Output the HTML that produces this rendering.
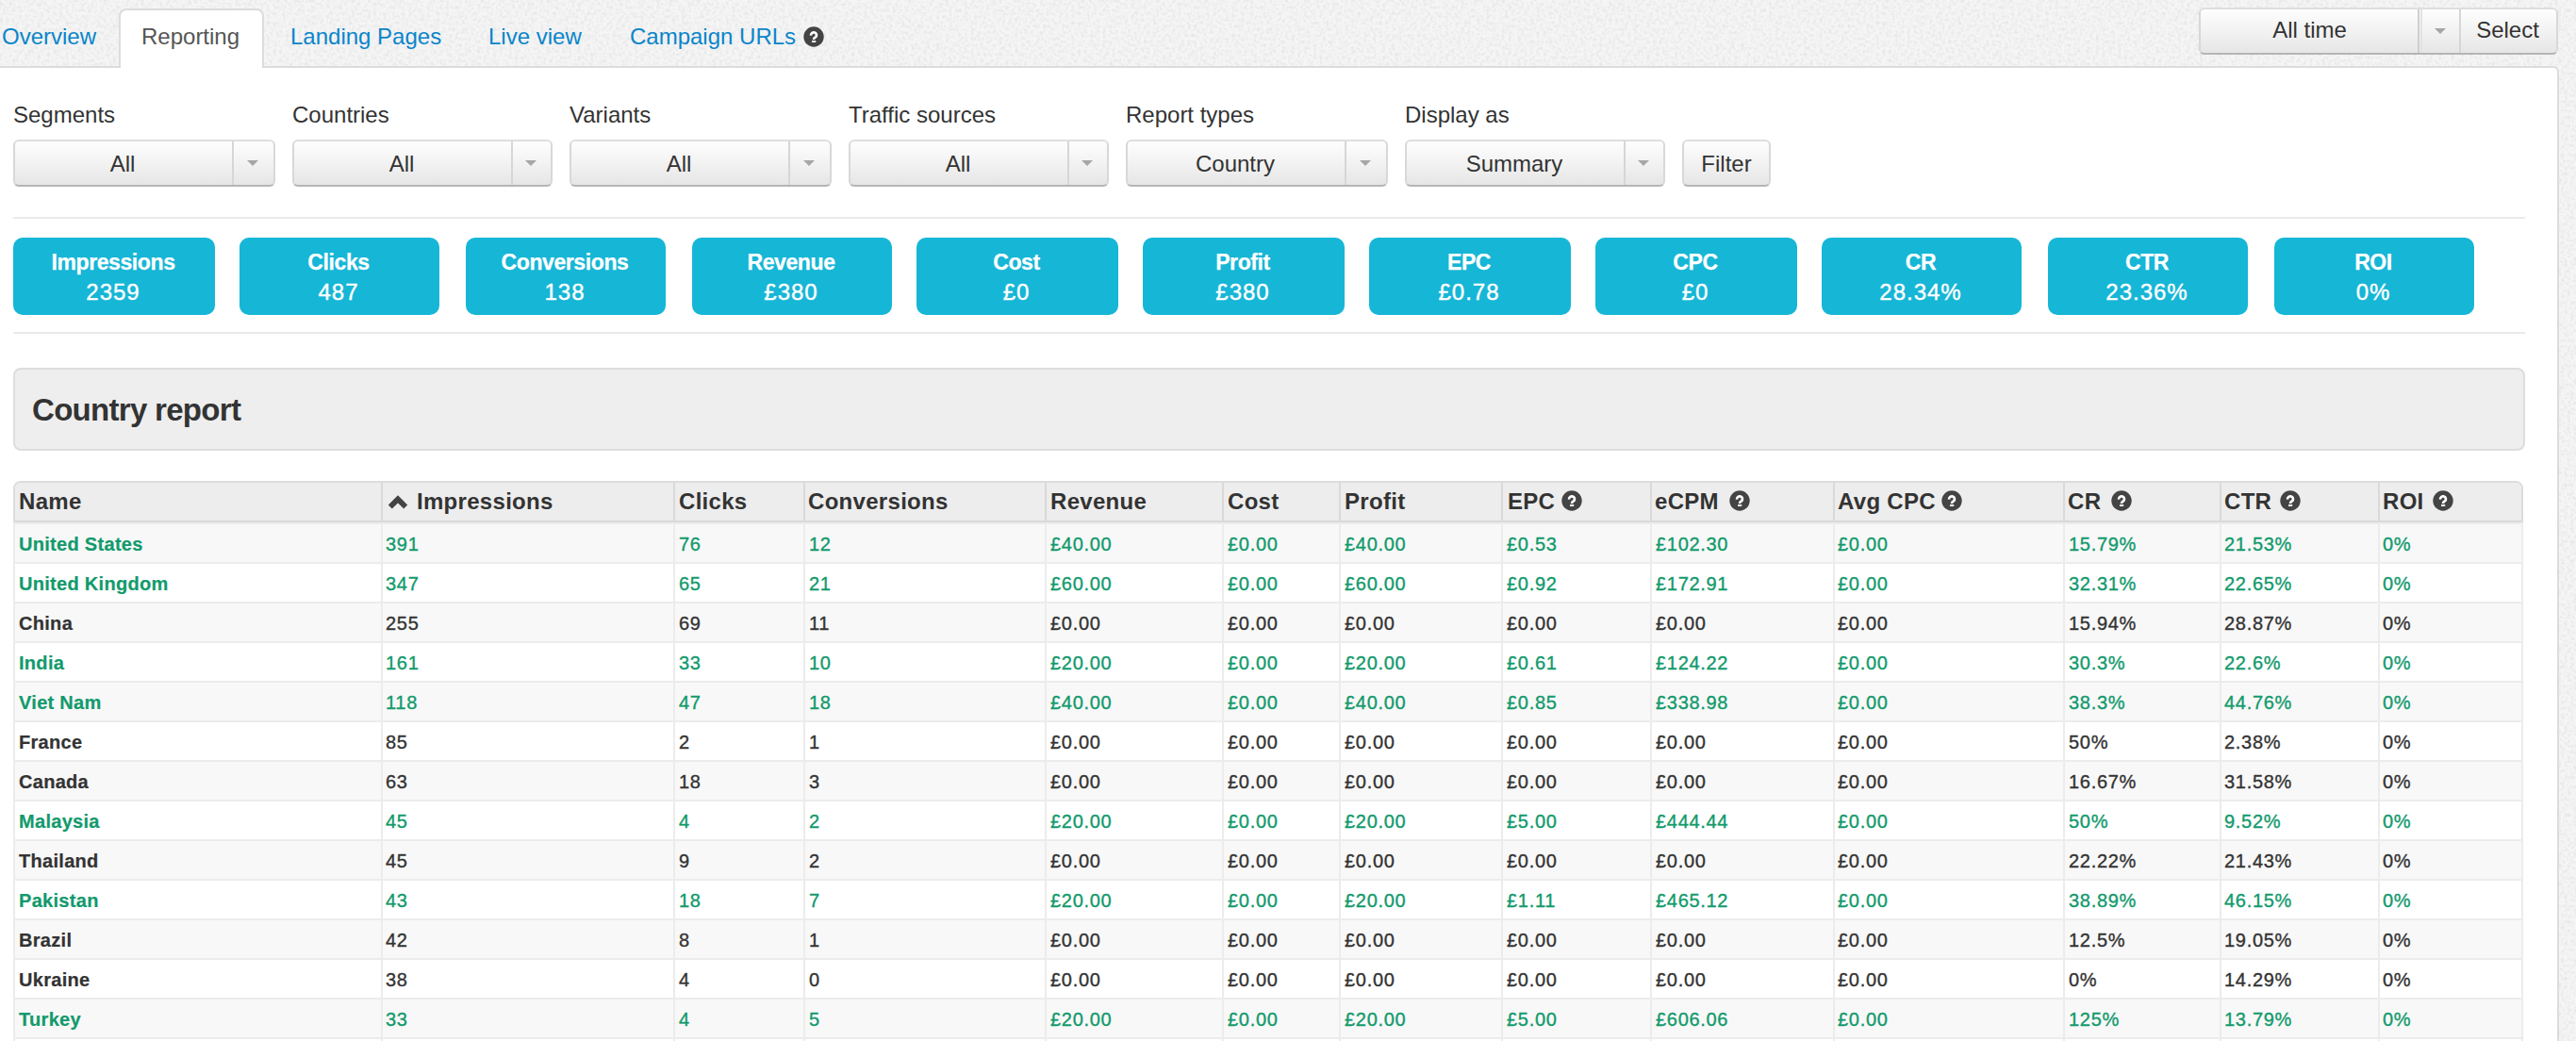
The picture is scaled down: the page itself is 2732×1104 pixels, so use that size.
<!DOCTYPE html><html><head><meta charset="utf-8"><title>Reporting</title><style>
*{box-sizing:border-box;margin:0;padding:0}
html,body{width:2732px;height:1104px;overflow:hidden}
body{background:#f1f1f1;font-family:"Liberation Sans",sans-serif;color:#333;position:relative}
.a{position:absolute;white-space:nowrap}
.tab{font-size:24px;line-height:24px;color:#0a85cb}
.acttab{position:absolute;left:126px;top:9px;width:154px;height:63px;background:#fff;border:2px solid #dcdcdc;border-bottom:none;border-radius:8px 8px 0 0}
.panel{position:absolute;left:-10px;top:70px;width:2724px;height:1100px;background:#fff;border:2px solid #dcdcdc;border-radius:0 6px 0 0}
.btn{position:absolute;background:linear-gradient(#fefefe,#e6e6e6);border:2px solid #d8d8d8;border-top-color:#dedede;border-bottom-color:#b5b5b5;border-radius:6px}
.lbl{font-size:24px;line-height:24px;color:#333}
.sel{font-size:24px;line-height:24px;color:#333;text-align:center}
.caret{position:absolute;width:0;height:0;border-left:6px solid transparent;border-right:6px solid transparent;border-top:6px solid #a6a6a6}
.div{position:absolute;width:2px;background:#d6d6d6}
.hr{position:absolute;left:14px;width:2664px;height:2px;background:#eaeaea}
.stat{position:absolute;top:252px;width:214px;height:82px;background:#16b6d6;border-radius:10px;color:#fff;text-align:center}
.stat .t{position:absolute;left:-2px;right:0;top:15px;font-size:23px;line-height:23px;font-weight:bold;letter-spacing:-.4px;-webkit-text-stroke:.25px #fff}
.stat .v{position:absolute;left:-2px;right:0;top:46px;font-size:24px;line-height:24px;letter-spacing:1px;-webkit-text-stroke:.4px #fff}
.well{position:absolute;left:14px;top:390px;width:2664px;height:88px;background:#eee;border:2px solid #ddd;border-radius:8px}
.well .h{position:absolute;left:18px;top:26px;font-size:33px;line-height:33px;letter-spacing:-.7px;font-weight:bold;color:#333}
.tbl{position:absolute;left:14px;top:510px;width:2662px;height:700px;border:2px solid #dcdcdc;border-radius:8px 8px 0 0;overflow:hidden;background:#fff}
.thead{position:absolute;left:0;top:0;width:100%;height:42px;background:#ededed;border-bottom:2px solid #d9d9d9}
.th{position:absolute;top:8px;letter-spacing:.3px;font-size:24px;line-height:24px;font-weight:bold;color:#333}
.row{position:absolute;left:0;width:100%;height:42px;border-top:2px solid #ececec}
.row.s{background:#f8f8f8}
.td{position:absolute;top:11px;font-size:20px;line-height:20px;letter-spacing:.7px;color:#333;-webkit-text-stroke:.35px currentColor}
.td.b{-webkit-text-stroke:.2px currentColor;letter-spacing:.3px}
.td.g{color:#129a6c}
.td.b{font-weight:bold}
.cd{position:absolute;width:2px;background:#ececec}
.hd{position:absolute;width:2px;background:#d9d9d9;top:0;height:40px}
svg.q{position:absolute}
</style></head><body>
<svg style="position:absolute;left:0;top:0" width="2732" height="1104"><filter id="nz" x="0" y="0" width="100%" height="100%"><feTurbulence type="fractalNoise" baseFrequency="0.3" numOctaves="2" seed="3"/><feColorMatrix values="0 0 0 0 0  0 0 0 0 0  0 0 0 0 0  1.6 0 0 0 -0.62"/></filter><rect width="2732" height="1104" fill="#f5f5f5"/><rect width="2732" height="1104" filter="url(#nz)" opacity=".08"/></svg>
<div class="panel"></div>
<div class="acttab"></div>
<div class="a tab" style="left:2px;top:27px">Overview</div>
<div class="a tab" style="left:150px;top:27px;color:#555">Reporting</div>
<div class="a tab" style="left:308px;top:27px">Landing Pages</div>
<div class="a tab" style="left:518px;top:27px">Live view</div>
<div class="a tab" style="left:668px;top:27px">Campaign URLs</div>
<svg class="q" style="left:852px;top:28px" width="22" height="22" viewBox="0 0 22 22"><circle cx="11" cy="11" r="10.7" fill="#444"/><path d="M8.1 9.6 A2.95 2.85 0 1 1 12.9 11.4 Q11 12.3 11 14" stroke="#fff" stroke-width="2.7" fill="none"/><rect x="9" y="14.9" width="4.2" height="2.2" rx=".6" fill="#fff"/></svg>
<div class="btn" style="left:2332px;top:8px;width:381px;height:50px"></div>
<div class="div" style="left:2564px;top:10px;height:46px;background:#cfcfcf"></div>
<div class="div" style="left:2567px;top:10px;height:46px;background:#e2e2e2"></div>
<div class="div" style="left:2608px;top:10px;height:46px;background:#d6d6d6"></div>
<div class="a sel" style="left:2335px;top:20px;width:229px">All time</div>
<div class="caret" style="left:2582px;top:30px"></div>
<div class="a sel" style="left:2608px;top:20px;width:103px">Select</div>
<div class="a lbl" style="left:14px;top:110px">Segments</div>
<div class="btn" style="left:14px;top:148px;width:278px;height:50px"></div>
<div class="div" style="left:246px;top:150px;height:46px"></div>
<div class="a sel" style="left:14px;top:162px;width:232px">All</div>
<div class="caret" style="left:262px;top:170px"></div>
<div class="a lbl" style="left:310px;top:110px">Countries</div>
<div class="btn" style="left:310px;top:148px;width:276px;height:50px"></div>
<div class="div" style="left:542px;top:150px;height:46px"></div>
<div class="a sel" style="left:310px;top:162px;width:232px">All</div>
<div class="caret" style="left:557px;top:170px"></div>
<div class="a lbl" style="left:604px;top:110px">Variants</div>
<div class="btn" style="left:604px;top:148px;width:278px;height:50px"></div>
<div class="div" style="left:836px;top:150px;height:46px"></div>
<div class="a sel" style="left:604px;top:162px;width:232px">All</div>
<div class="caret" style="left:852px;top:170px"></div>
<div class="a lbl" style="left:900px;top:110px">Traffic sources</div>
<div class="btn" style="left:900px;top:148px;width:276px;height:50px"></div>
<div class="div" style="left:1132px;top:150px;height:46px"></div>
<div class="a sel" style="left:900px;top:162px;width:232px">All</div>
<div class="caret" style="left:1147px;top:170px"></div>
<div class="a lbl" style="left:1194px;top:110px">Report types</div>
<div class="btn" style="left:1194px;top:148px;width:278px;height:50px"></div>
<div class="div" style="left:1426px;top:150px;height:46px"></div>
<div class="a sel" style="left:1194px;top:162px;width:232px">Country</div>
<div class="caret" style="left:1442px;top:170px"></div>
<div class="a lbl" style="left:1490px;top:110px">Display as</div>
<div class="btn" style="left:1490px;top:148px;width:276px;height:50px"></div>
<div class="div" style="left:1722px;top:150px;height:46px"></div>
<div class="a sel" style="left:1490px;top:162px;width:232px">Summary</div>
<div class="caret" style="left:1737px;top:170px"></div>
<div class="btn" style="left:1784px;top:148px;width:94px;height:50px"></div>
<div class="a sel" style="left:1784px;top:162px;width:94px">Filter</div>
<div class="hr" style="top:230px"></div>
<div class="hr" style="top:352px"></div>
<div class="stat" style="left:14px;width:214px"><div class="t">Impressions</div><div class="v">2359</div></div>
<div class="stat" style="left:254px;width:212px"><div class="t">Clicks</div><div class="v">487</div></div>
<div class="stat" style="left:494px;width:212px"><div class="t">Conversions</div><div class="v">138</div></div>
<div class="stat" style="left:734px;width:212px"><div class="t">Revenue</div><div class="v">£380</div></div>
<div class="stat" style="left:972px;width:214px"><div class="t">Cost</div><div class="v">£0</div></div>
<div class="stat" style="left:1212px;width:214px"><div class="t">Profit</div><div class="v">£380</div></div>
<div class="stat" style="left:1452px;width:214px"><div class="t">EPC</div><div class="v">£0.78</div></div>
<div class="stat" style="left:1692px;width:214px"><div class="t">CPC</div><div class="v">£0</div></div>
<div class="stat" style="left:1932px;width:212px"><div class="t">CR</div><div class="v">28.34%</div></div>
<div class="stat" style="left:2172px;width:212px"><div class="t">CTR</div><div class="v">23.36%</div></div>
<div class="stat" style="left:2412px;width:212px"><div class="t">ROI</div><div class="v">0%</div></div>
<div class="well"><div class="h">Country report</div></div>
<div class="tbl">
<div class="thead">
<div class="th" style="left:4px">Name</div>
<div class="hd" style="left:388px"></div>
<svg class="q" style="left:396px;top:12px" width="22" height="16" viewBox="0 0 22 16"><path d="M1.8 13.6 L10 5.4 L18.2 13.6" stroke="#444" stroke-width="5.7" fill="none" stroke-linejoin="miter" stroke-miterlimit="10"/></svg>
<div class="th" style="left:426px">Impressions</div>
<div class="hd" style="left:698px"></div>
<div class="th" style="left:704px">Clicks</div>
<div class="hd" style="left:836px"></div>
<div class="th" style="left:841px">Conversions</div>
<div class="hd" style="left:1092px"></div>
<div class="th" style="left:1098px">Revenue</div>
<div class="hd" style="left:1280px"></div>
<div class="th" style="left:1286px">Cost</div>
<div class="hd" style="left:1404px"></div>
<div class="th" style="left:1410px">Profit</div>
<div class="hd" style="left:1576px"></div>
<div class="th" style="left:1583px">EPC</div>
<svg class="q" style="left:1640px;top:8px" width="22" height="22" viewBox="0 0 22 22"><circle cx="11" cy="11" r="10.7" fill="#444"/><path d="M8.1 9.6 A2.95 2.85 0 1 1 12.9 11.4 Q11 12.3 11 14" stroke="#fff" stroke-width="2.7" fill="none"/><rect x="9" y="14.9" width="4.2" height="2.2" rx=".6" fill="#fff"/></svg>
<div class="hd" style="left:1734px"></div>
<div class="th" style="left:1739px">eCPM</div>
<svg class="q" style="left:1818px;top:8px" width="22" height="22" viewBox="0 0 22 22"><circle cx="11" cy="11" r="10.7" fill="#444"/><path d="M8.1 9.6 A2.95 2.85 0 1 1 12.9 11.4 Q11 12.3 11 14" stroke="#fff" stroke-width="2.7" fill="none"/><rect x="9" y="14.9" width="4.2" height="2.2" rx=".6" fill="#fff"/></svg>
<div class="hd" style="left:1928px"></div>
<div class="th" style="left:1933px">Avg CPC</div>
<svg class="q" style="left:2043px;top:8px" width="22" height="22" viewBox="0 0 22 22"><circle cx="11" cy="11" r="10.7" fill="#444"/><path d="M8.1 9.6 A2.95 2.85 0 1 1 12.9 11.4 Q11 12.3 11 14" stroke="#fff" stroke-width="2.7" fill="none"/><rect x="9" y="14.9" width="4.2" height="2.2" rx=".6" fill="#fff"/></svg>
<div class="hd" style="left:2172px"></div>
<div class="th" style="left:2177px">CR</div>
<svg class="q" style="left:2223px;top:8px" width="22" height="22" viewBox="0 0 22 22"><circle cx="11" cy="11" r="10.7" fill="#444"/><path d="M8.1 9.6 A2.95 2.85 0 1 1 12.9 11.4 Q11 12.3 11 14" stroke="#fff" stroke-width="2.7" fill="none"/><rect x="9" y="14.9" width="4.2" height="2.2" rx=".6" fill="#fff"/></svg>
<div class="hd" style="left:2338px"></div>
<div class="th" style="left:2343px">CTR</div>
<svg class="q" style="left:2402px;top:8px" width="22" height="22" viewBox="0 0 22 22"><circle cx="11" cy="11" r="10.7" fill="#444"/><path d="M8.1 9.6 A2.95 2.85 0 1 1 12.9 11.4 Q11 12.3 11 14" stroke="#fff" stroke-width="2.7" fill="none"/><rect x="9" y="14.9" width="4.2" height="2.2" rx=".6" fill="#fff"/></svg>
<div class="hd" style="left:2506px"></div>
<div class="th" style="left:2511px">ROI</div>
<svg class="q" style="left:2564px;top:8px" width="22" height="22" viewBox="0 0 22 22"><circle cx="11" cy="11" r="10.7" fill="#444"/><path d="M8.1 9.6 A2.95 2.85 0 1 1 12.9 11.4 Q11 12.3 11 14" stroke="#fff" stroke-width="2.7" fill="none"/><rect x="9" y="14.9" width="4.2" height="2.2" rx=".6" fill="#fff"/></svg>
</div>
<div class="row s" style="top:42px">
<div class="td g b" style="left:4px">United States</div>
<div class="cd" style="left:388px;top:0;height:42px"></div>
<div class="td g" style="left:393px">391</div>
<div class="cd" style="left:698px;top:0;height:42px"></div>
<div class="td g" style="left:704px">76</div>
<div class="cd" style="left:836px;top:0;height:42px"></div>
<div class="td g" style="left:842px">12</div>
<div class="cd" style="left:1092px;top:0;height:42px"></div>
<div class="td g" style="left:1098px">£40.00</div>
<div class="cd" style="left:1280px;top:0;height:42px"></div>
<div class="td g" style="left:1286px">£0.00</div>
<div class="cd" style="left:1404px;top:0;height:42px"></div>
<div class="td g" style="left:1410px">£40.00</div>
<div class="cd" style="left:1576px;top:0;height:42px"></div>
<div class="td g" style="left:1582px">£0.53</div>
<div class="cd" style="left:1734px;top:0;height:42px"></div>
<div class="td g" style="left:1740px">£102.30</div>
<div class="cd" style="left:1928px;top:0;height:42px"></div>
<div class="td g" style="left:1933px">£0.00</div>
<div class="cd" style="left:2172px;top:0;height:42px"></div>
<div class="td g" style="left:2178px">15.79%</div>
<div class="cd" style="left:2338px;top:0;height:42px"></div>
<div class="td g" style="left:2343px">21.53%</div>
<div class="cd" style="left:2506px;top:0;height:42px"></div>
<div class="td g" style="left:2511px">0%</div>
</div>
<div class="row" style="top:84px">
<div class="td g b" style="left:4px">United Kingdom</div>
<div class="cd" style="left:388px;top:0;height:42px"></div>
<div class="td g" style="left:393px">347</div>
<div class="cd" style="left:698px;top:0;height:42px"></div>
<div class="td g" style="left:704px">65</div>
<div class="cd" style="left:836px;top:0;height:42px"></div>
<div class="td g" style="left:842px">21</div>
<div class="cd" style="left:1092px;top:0;height:42px"></div>
<div class="td g" style="left:1098px">£60.00</div>
<div class="cd" style="left:1280px;top:0;height:42px"></div>
<div class="td g" style="left:1286px">£0.00</div>
<div class="cd" style="left:1404px;top:0;height:42px"></div>
<div class="td g" style="left:1410px">£60.00</div>
<div class="cd" style="left:1576px;top:0;height:42px"></div>
<div class="td g" style="left:1582px">£0.92</div>
<div class="cd" style="left:1734px;top:0;height:42px"></div>
<div class="td g" style="left:1740px">£172.91</div>
<div class="cd" style="left:1928px;top:0;height:42px"></div>
<div class="td g" style="left:1933px">£0.00</div>
<div class="cd" style="left:2172px;top:0;height:42px"></div>
<div class="td g" style="left:2178px">32.31%</div>
<div class="cd" style="left:2338px;top:0;height:42px"></div>
<div class="td g" style="left:2343px">22.65%</div>
<div class="cd" style="left:2506px;top:0;height:42px"></div>
<div class="td g" style="left:2511px">0%</div>
</div>
<div class="row s" style="top:126px">
<div class="td b" style="left:4px">China</div>
<div class="cd" style="left:388px;top:0;height:42px"></div>
<div class="td" style="left:393px">255</div>
<div class="cd" style="left:698px;top:0;height:42px"></div>
<div class="td" style="left:704px">69</div>
<div class="cd" style="left:836px;top:0;height:42px"></div>
<div class="td" style="left:842px">11</div>
<div class="cd" style="left:1092px;top:0;height:42px"></div>
<div class="td" style="left:1098px">£0.00</div>
<div class="cd" style="left:1280px;top:0;height:42px"></div>
<div class="td" style="left:1286px">£0.00</div>
<div class="cd" style="left:1404px;top:0;height:42px"></div>
<div class="td" style="left:1410px">£0.00</div>
<div class="cd" style="left:1576px;top:0;height:42px"></div>
<div class="td" style="left:1582px">£0.00</div>
<div class="cd" style="left:1734px;top:0;height:42px"></div>
<div class="td" style="left:1740px">£0.00</div>
<div class="cd" style="left:1928px;top:0;height:42px"></div>
<div class="td" style="left:1933px">£0.00</div>
<div class="cd" style="left:2172px;top:0;height:42px"></div>
<div class="td" style="left:2178px">15.94%</div>
<div class="cd" style="left:2338px;top:0;height:42px"></div>
<div class="td" style="left:2343px">28.87%</div>
<div class="cd" style="left:2506px;top:0;height:42px"></div>
<div class="td" style="left:2511px">0%</div>
</div>
<div class="row" style="top:168px">
<div class="td g b" style="left:4px">India</div>
<div class="cd" style="left:388px;top:0;height:42px"></div>
<div class="td g" style="left:393px">161</div>
<div class="cd" style="left:698px;top:0;height:42px"></div>
<div class="td g" style="left:704px">33</div>
<div class="cd" style="left:836px;top:0;height:42px"></div>
<div class="td g" style="left:842px">10</div>
<div class="cd" style="left:1092px;top:0;height:42px"></div>
<div class="td g" style="left:1098px">£20.00</div>
<div class="cd" style="left:1280px;top:0;height:42px"></div>
<div class="td g" style="left:1286px">£0.00</div>
<div class="cd" style="left:1404px;top:0;height:42px"></div>
<div class="td g" style="left:1410px">£20.00</div>
<div class="cd" style="left:1576px;top:0;height:42px"></div>
<div class="td g" style="left:1582px">£0.61</div>
<div class="cd" style="left:1734px;top:0;height:42px"></div>
<div class="td g" style="left:1740px">£124.22</div>
<div class="cd" style="left:1928px;top:0;height:42px"></div>
<div class="td g" style="left:1933px">£0.00</div>
<div class="cd" style="left:2172px;top:0;height:42px"></div>
<div class="td g" style="left:2178px">30.3%</div>
<div class="cd" style="left:2338px;top:0;height:42px"></div>
<div class="td g" style="left:2343px">22.6%</div>
<div class="cd" style="left:2506px;top:0;height:42px"></div>
<div class="td g" style="left:2511px">0%</div>
</div>
<div class="row s" style="top:210px">
<div class="td g b" style="left:4px">Viet Nam</div>
<div class="cd" style="left:388px;top:0;height:42px"></div>
<div class="td g" style="left:393px">118</div>
<div class="cd" style="left:698px;top:0;height:42px"></div>
<div class="td g" style="left:704px">47</div>
<div class="cd" style="left:836px;top:0;height:42px"></div>
<div class="td g" style="left:842px">18</div>
<div class="cd" style="left:1092px;top:0;height:42px"></div>
<div class="td g" style="left:1098px">£40.00</div>
<div class="cd" style="left:1280px;top:0;height:42px"></div>
<div class="td g" style="left:1286px">£0.00</div>
<div class="cd" style="left:1404px;top:0;height:42px"></div>
<div class="td g" style="left:1410px">£40.00</div>
<div class="cd" style="left:1576px;top:0;height:42px"></div>
<div class="td g" style="left:1582px">£0.85</div>
<div class="cd" style="left:1734px;top:0;height:42px"></div>
<div class="td g" style="left:1740px">£338.98</div>
<div class="cd" style="left:1928px;top:0;height:42px"></div>
<div class="td g" style="left:1933px">£0.00</div>
<div class="cd" style="left:2172px;top:0;height:42px"></div>
<div class="td g" style="left:2178px">38.3%</div>
<div class="cd" style="left:2338px;top:0;height:42px"></div>
<div class="td g" style="left:2343px">44.76%</div>
<div class="cd" style="left:2506px;top:0;height:42px"></div>
<div class="td g" style="left:2511px">0%</div>
</div>
<div class="row" style="top:252px">
<div class="td b" style="left:4px">France</div>
<div class="cd" style="left:388px;top:0;height:42px"></div>
<div class="td" style="left:393px">85</div>
<div class="cd" style="left:698px;top:0;height:42px"></div>
<div class="td" style="left:704px">2</div>
<div class="cd" style="left:836px;top:0;height:42px"></div>
<div class="td" style="left:842px">1</div>
<div class="cd" style="left:1092px;top:0;height:42px"></div>
<div class="td" style="left:1098px">£0.00</div>
<div class="cd" style="left:1280px;top:0;height:42px"></div>
<div class="td" style="left:1286px">£0.00</div>
<div class="cd" style="left:1404px;top:0;height:42px"></div>
<div class="td" style="left:1410px">£0.00</div>
<div class="cd" style="left:1576px;top:0;height:42px"></div>
<div class="td" style="left:1582px">£0.00</div>
<div class="cd" style="left:1734px;top:0;height:42px"></div>
<div class="td" style="left:1740px">£0.00</div>
<div class="cd" style="left:1928px;top:0;height:42px"></div>
<div class="td" style="left:1933px">£0.00</div>
<div class="cd" style="left:2172px;top:0;height:42px"></div>
<div class="td" style="left:2178px">50%</div>
<div class="cd" style="left:2338px;top:0;height:42px"></div>
<div class="td" style="left:2343px">2.38%</div>
<div class="cd" style="left:2506px;top:0;height:42px"></div>
<div class="td" style="left:2511px">0%</div>
</div>
<div class="row s" style="top:294px">
<div class="td b" style="left:4px">Canada</div>
<div class="cd" style="left:388px;top:0;height:42px"></div>
<div class="td" style="left:393px">63</div>
<div class="cd" style="left:698px;top:0;height:42px"></div>
<div class="td" style="left:704px">18</div>
<div class="cd" style="left:836px;top:0;height:42px"></div>
<div class="td" style="left:842px">3</div>
<div class="cd" style="left:1092px;top:0;height:42px"></div>
<div class="td" style="left:1098px">£0.00</div>
<div class="cd" style="left:1280px;top:0;height:42px"></div>
<div class="td" style="left:1286px">£0.00</div>
<div class="cd" style="left:1404px;top:0;height:42px"></div>
<div class="td" style="left:1410px">£0.00</div>
<div class="cd" style="left:1576px;top:0;height:42px"></div>
<div class="td" style="left:1582px">£0.00</div>
<div class="cd" style="left:1734px;top:0;height:42px"></div>
<div class="td" style="left:1740px">£0.00</div>
<div class="cd" style="left:1928px;top:0;height:42px"></div>
<div class="td" style="left:1933px">£0.00</div>
<div class="cd" style="left:2172px;top:0;height:42px"></div>
<div class="td" style="left:2178px">16.67%</div>
<div class="cd" style="left:2338px;top:0;height:42px"></div>
<div class="td" style="left:2343px">31.58%</div>
<div class="cd" style="left:2506px;top:0;height:42px"></div>
<div class="td" style="left:2511px">0%</div>
</div>
<div class="row" style="top:336px">
<div class="td g b" style="left:4px">Malaysia</div>
<div class="cd" style="left:388px;top:0;height:42px"></div>
<div class="td g" style="left:393px">45</div>
<div class="cd" style="left:698px;top:0;height:42px"></div>
<div class="td g" style="left:704px">4</div>
<div class="cd" style="left:836px;top:0;height:42px"></div>
<div class="td g" style="left:842px">2</div>
<div class="cd" style="left:1092px;top:0;height:42px"></div>
<div class="td g" style="left:1098px">£20.00</div>
<div class="cd" style="left:1280px;top:0;height:42px"></div>
<div class="td g" style="left:1286px">£0.00</div>
<div class="cd" style="left:1404px;top:0;height:42px"></div>
<div class="td g" style="left:1410px">£20.00</div>
<div class="cd" style="left:1576px;top:0;height:42px"></div>
<div class="td g" style="left:1582px">£5.00</div>
<div class="cd" style="left:1734px;top:0;height:42px"></div>
<div class="td g" style="left:1740px">£444.44</div>
<div class="cd" style="left:1928px;top:0;height:42px"></div>
<div class="td g" style="left:1933px">£0.00</div>
<div class="cd" style="left:2172px;top:0;height:42px"></div>
<div class="td g" style="left:2178px">50%</div>
<div class="cd" style="left:2338px;top:0;height:42px"></div>
<div class="td g" style="left:2343px">9.52%</div>
<div class="cd" style="left:2506px;top:0;height:42px"></div>
<div class="td g" style="left:2511px">0%</div>
</div>
<div class="row s" style="top:378px">
<div class="td b" style="left:4px">Thailand</div>
<div class="cd" style="left:388px;top:0;height:42px"></div>
<div class="td" style="left:393px">45</div>
<div class="cd" style="left:698px;top:0;height:42px"></div>
<div class="td" style="left:704px">9</div>
<div class="cd" style="left:836px;top:0;height:42px"></div>
<div class="td" style="left:842px">2</div>
<div class="cd" style="left:1092px;top:0;height:42px"></div>
<div class="td" style="left:1098px">£0.00</div>
<div class="cd" style="left:1280px;top:0;height:42px"></div>
<div class="td" style="left:1286px">£0.00</div>
<div class="cd" style="left:1404px;top:0;height:42px"></div>
<div class="td" style="left:1410px">£0.00</div>
<div class="cd" style="left:1576px;top:0;height:42px"></div>
<div class="td" style="left:1582px">£0.00</div>
<div class="cd" style="left:1734px;top:0;height:42px"></div>
<div class="td" style="left:1740px">£0.00</div>
<div class="cd" style="left:1928px;top:0;height:42px"></div>
<div class="td" style="left:1933px">£0.00</div>
<div class="cd" style="left:2172px;top:0;height:42px"></div>
<div class="td" style="left:2178px">22.22%</div>
<div class="cd" style="left:2338px;top:0;height:42px"></div>
<div class="td" style="left:2343px">21.43%</div>
<div class="cd" style="left:2506px;top:0;height:42px"></div>
<div class="td" style="left:2511px">0%</div>
</div>
<div class="row" style="top:420px">
<div class="td g b" style="left:4px">Pakistan</div>
<div class="cd" style="left:388px;top:0;height:42px"></div>
<div class="td g" style="left:393px">43</div>
<div class="cd" style="left:698px;top:0;height:42px"></div>
<div class="td g" style="left:704px">18</div>
<div class="cd" style="left:836px;top:0;height:42px"></div>
<div class="td g" style="left:842px">7</div>
<div class="cd" style="left:1092px;top:0;height:42px"></div>
<div class="td g" style="left:1098px">£20.00</div>
<div class="cd" style="left:1280px;top:0;height:42px"></div>
<div class="td g" style="left:1286px">£0.00</div>
<div class="cd" style="left:1404px;top:0;height:42px"></div>
<div class="td g" style="left:1410px">£20.00</div>
<div class="cd" style="left:1576px;top:0;height:42px"></div>
<div class="td g" style="left:1582px">£1.11</div>
<div class="cd" style="left:1734px;top:0;height:42px"></div>
<div class="td g" style="left:1740px">£465.12</div>
<div class="cd" style="left:1928px;top:0;height:42px"></div>
<div class="td g" style="left:1933px">£0.00</div>
<div class="cd" style="left:2172px;top:0;height:42px"></div>
<div class="td g" style="left:2178px">38.89%</div>
<div class="cd" style="left:2338px;top:0;height:42px"></div>
<div class="td g" style="left:2343px">46.15%</div>
<div class="cd" style="left:2506px;top:0;height:42px"></div>
<div class="td g" style="left:2511px">0%</div>
</div>
<div class="row s" style="top:462px">
<div class="td b" style="left:4px">Brazil</div>
<div class="cd" style="left:388px;top:0;height:42px"></div>
<div class="td" style="left:393px">42</div>
<div class="cd" style="left:698px;top:0;height:42px"></div>
<div class="td" style="left:704px">8</div>
<div class="cd" style="left:836px;top:0;height:42px"></div>
<div class="td" style="left:842px">1</div>
<div class="cd" style="left:1092px;top:0;height:42px"></div>
<div class="td" style="left:1098px">£0.00</div>
<div class="cd" style="left:1280px;top:0;height:42px"></div>
<div class="td" style="left:1286px">£0.00</div>
<div class="cd" style="left:1404px;top:0;height:42px"></div>
<div class="td" style="left:1410px">£0.00</div>
<div class="cd" style="left:1576px;top:0;height:42px"></div>
<div class="td" style="left:1582px">£0.00</div>
<div class="cd" style="left:1734px;top:0;height:42px"></div>
<div class="td" style="left:1740px">£0.00</div>
<div class="cd" style="left:1928px;top:0;height:42px"></div>
<div class="td" style="left:1933px">£0.00</div>
<div class="cd" style="left:2172px;top:0;height:42px"></div>
<div class="td" style="left:2178px">12.5%</div>
<div class="cd" style="left:2338px;top:0;height:42px"></div>
<div class="td" style="left:2343px">19.05%</div>
<div class="cd" style="left:2506px;top:0;height:42px"></div>
<div class="td" style="left:2511px">0%</div>
</div>
<div class="row" style="top:504px">
<div class="td b" style="left:4px">Ukraine</div>
<div class="cd" style="left:388px;top:0;height:42px"></div>
<div class="td" style="left:393px">38</div>
<div class="cd" style="left:698px;top:0;height:42px"></div>
<div class="td" style="left:704px">4</div>
<div class="cd" style="left:836px;top:0;height:42px"></div>
<div class="td" style="left:842px">0</div>
<div class="cd" style="left:1092px;top:0;height:42px"></div>
<div class="td" style="left:1098px">£0.00</div>
<div class="cd" style="left:1280px;top:0;height:42px"></div>
<div class="td" style="left:1286px">£0.00</div>
<div class="cd" style="left:1404px;top:0;height:42px"></div>
<div class="td" style="left:1410px">£0.00</div>
<div class="cd" style="left:1576px;top:0;height:42px"></div>
<div class="td" style="left:1582px">£0.00</div>
<div class="cd" style="left:1734px;top:0;height:42px"></div>
<div class="td" style="left:1740px">£0.00</div>
<div class="cd" style="left:1928px;top:0;height:42px"></div>
<div class="td" style="left:1933px">£0.00</div>
<div class="cd" style="left:2172px;top:0;height:42px"></div>
<div class="td" style="left:2178px">0%</div>
<div class="cd" style="left:2338px;top:0;height:42px"></div>
<div class="td" style="left:2343px">14.29%</div>
<div class="cd" style="left:2506px;top:0;height:42px"></div>
<div class="td" style="left:2511px">0%</div>
</div>
<div class="row s" style="top:546px">
<div class="td g b" style="left:4px">Turkey</div>
<div class="cd" style="left:388px;top:0;height:42px"></div>
<div class="td g" style="left:393px">33</div>
<div class="cd" style="left:698px;top:0;height:42px"></div>
<div class="td g" style="left:704px">4</div>
<div class="cd" style="left:836px;top:0;height:42px"></div>
<div class="td g" style="left:842px">5</div>
<div class="cd" style="left:1092px;top:0;height:42px"></div>
<div class="td g" style="left:1098px">£20.00</div>
<div class="cd" style="left:1280px;top:0;height:42px"></div>
<div class="td g" style="left:1286px">£0.00</div>
<div class="cd" style="left:1404px;top:0;height:42px"></div>
<div class="td g" style="left:1410px">£20.00</div>
<div class="cd" style="left:1576px;top:0;height:42px"></div>
<div class="td g" style="left:1582px">£5.00</div>
<div class="cd" style="left:1734px;top:0;height:42px"></div>
<div class="td g" style="left:1740px">£606.06</div>
<div class="cd" style="left:1928px;top:0;height:42px"></div>
<div class="td g" style="left:1933px">£0.00</div>
<div class="cd" style="left:2172px;top:0;height:42px"></div>
<div class="td g" style="left:2178px">125%</div>
<div class="cd" style="left:2338px;top:0;height:42px"></div>
<div class="td g" style="left:2343px">13.79%</div>
<div class="cd" style="left:2506px;top:0;height:42px"></div>
<div class="td g" style="left:2511px">0%</div>
</div>
<div class="row" style="top:588px">
<div class="cd" style="left:388px;top:0;height:42px"></div>
<div class="cd" style="left:698px;top:0;height:42px"></div>
<div class="cd" style="left:836px;top:0;height:42px"></div>
<div class="cd" style="left:1092px;top:0;height:42px"></div>
<div class="cd" style="left:1280px;top:0;height:42px"></div>
<div class="cd" style="left:1404px;top:0;height:42px"></div>
<div class="cd" style="left:1576px;top:0;height:42px"></div>
<div class="cd" style="left:1734px;top:0;height:42px"></div>
<div class="cd" style="left:1928px;top:0;height:42px"></div>
<div class="cd" style="left:2172px;top:0;height:42px"></div>
<div class="cd" style="left:2338px;top:0;height:42px"></div>
<div class="cd" style="left:2506px;top:0;height:42px"></div>
</div>
</div>
<div style="position:absolute;left:14px;top:554px;width:2px;height:560px;background:#ececec"></div>
<div style="position:absolute;left:2674px;top:554px;width:2px;height:560px;background:#ececec"></div>
</body></html>
